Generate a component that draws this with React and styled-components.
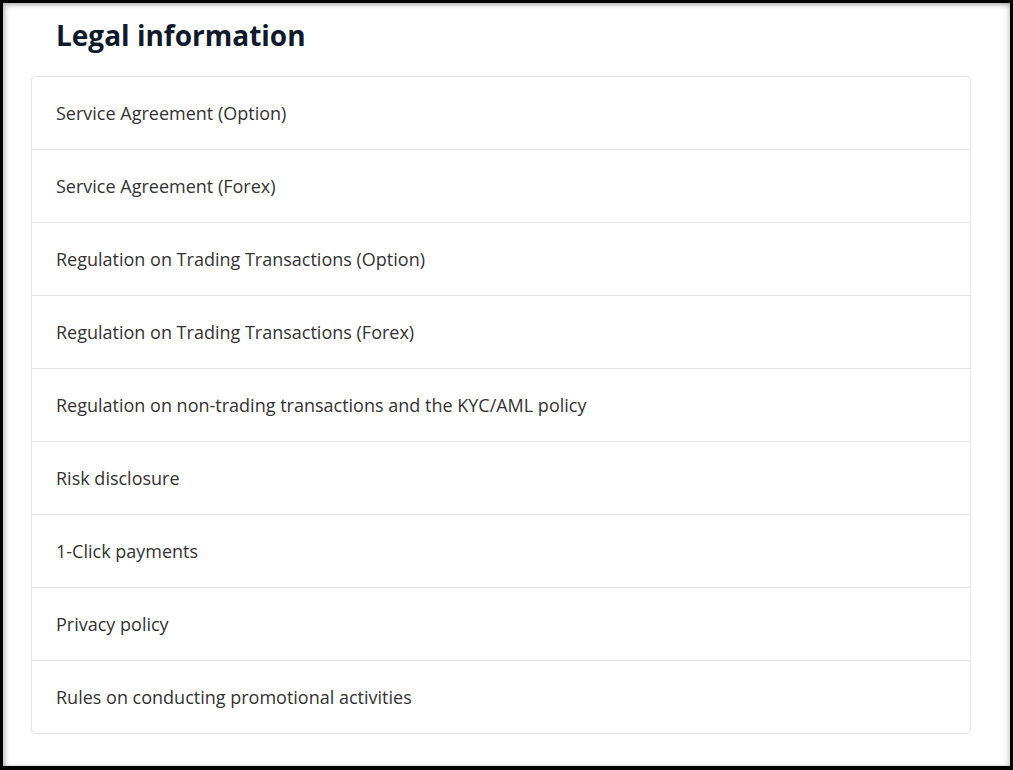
import React from "react";
import styled, { createGlobalStyle } from "styled-components";

const LINKS = [
  "Service Agreement (Option)",
  "Service Agreement (Forex)",
  "Regulation on Trading Transactions (Option)",
  "Regulation on Trading Transactions (Forex)",
  "Regulation on non-trading transactions and the KYC/AML policy",
  "Risk disclosure",
  "1-Click payments",
  "Privacy policy",
  "Rules on conducting promotional activities",
];

const GlobalStyle = createGlobalStyle`
  html, body {
    margin: 0;
    padding: 0;
    background: #000;
  }
  body {
    font-family: "Open Sans", "Noto Sans", sans-serif;
  }
`;

const App = () => {
  return (
    <>
      <GlobalStyle />
      <Screen>
        <Window>
          <Title>Legal information</Title>
          <LinkList>
            {LINKS.map((label) => (
              <LinkRow key={label} href="#">
                {label}
              </LinkRow>
            ))}
          </LinkList>
        </Window>
      </Screen>
    </>
  );
};

const Screen = styled.div`
  width: 1013px;
  height: 770px;
  box-sizing: border-box;
  padding: 3px 3px 4px 3px;
  background: #000;
`;

const Window = styled.div`
  height: 100%;
  box-sizing: border-box;
  padding: 14px 0 0 28px;
  background: #fff;
  box-shadow: inset 2px 2px 5px rgba(0, 0, 0, 0.28),
    inset -3px 0 5px rgba(0, 0, 0, 0.12);
`;

const Title = styled.h1`
  margin: 0 0 23px 25px;
  font-size: 28px;
  line-height: 36px;
  font-weight: 700;
  color: #0e1a2c;
`;

const LinkList = styled.nav`
  display: flex;
  flex-direction: column;
  width: 940px;
  box-sizing: border-box;
  border: 1px solid #e6e6e6;
  border-radius: 4px;
  background: #fff;
`;

const LinkRow = styled.a`
  display: flex;
  align-items: center;
  height: 72px;
  padding: 0 24px 1px;
  box-sizing: border-box;
  font-size: 18px;
  color: #333;
  text-decoration: none;
  border-bottom: 1px solid #e6e6e6;

  &:last-child {
    height: 72px;
    border-bottom: none;
  }

  &:not(:last-child) {
    height: 73px;
  }
`;

export default App;
